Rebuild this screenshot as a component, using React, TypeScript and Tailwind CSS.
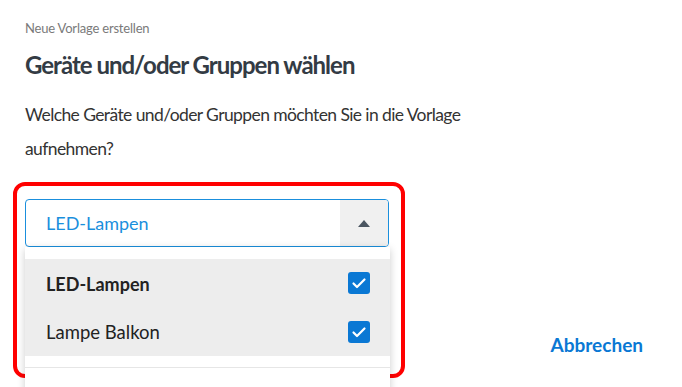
const items = [
  { label: 'LED-Lampen', bold: true },
  { label: 'Lampe Balkon', bold: false },
]

function Checkbox() {
  return (
    <span className="flex h-[22px] w-[22px] items-center justify-center rounded-[3px] bg-[#0a78d4]">
      <svg viewBox="0 0 16 16" className="h-[16px] w-[16px]" fill="none">
        <path d="M2.5 8.5l3.5 3.5 7.5-7.5" stroke="white" strokeWidth="2.2" strokeLinecap="round" strokeLinejoin="round" />
      </svg>
    </span>
  )
}

export default function App() {
  return (
    <div className="relative h-[387px] w-[682px] overflow-hidden bg-white px-[25px] font-['Lato',sans-serif]">
      <p className="pt-[18px] text-[13px] leading-[20px] tracking-[-0.2px] text-[#7a7a7a]">Neue Vorlage erstellen</p>
      <h1 className="mt-[9px] text-[24px] font-bold leading-[36px] tracking-[-1px] text-[#333b44]">
        Geräte und/oder Gruppen wählen
      </h1>
      <p className="mt-[15px] w-[470px] text-[17.5px] leading-[34px] tracking-[-0.6px] text-[#333]">
        Welche Geräte und/oder Gruppen möchten Sie in die Vorlage aufnehmen?
      </p>

      <div className="relative mt-[33px] w-[364px]">
        <div className="flex h-[48px] items-stretch overflow-hidden rounded-[4px] border border-[#1a8fdd]">
          <span className="flex flex-1 items-center pl-[20px] text-[18px] text-[#1a8fdd]">LED-Lampen</span>
          <span className="flex w-[48px] items-center justify-center bg-[#f0f0f0]">
            <svg viewBox="0 0 12 7" className="h-[7px] w-[12px]">
              <path d="M0 7L6 0l6 7z" fill="#4a5560" />
            </svg>
          </span>
        </div>

        <div className="absolute left-0 top-full z-10 w-[365px] bg-white pt-[12px] shadow-[0_2px_8px_rgba(0,0,0,0.2)]">
          <ul className="bg-[#ededed]">
            {items.map((item) => (
              <li key={item.label} className="flex h-[48.5px] items-center justify-between pl-[21px] pr-[20px]">
                <span className={item.bold ? 'pt-[2px] text-[18px] font-bold text-[#222]' : 'pt-[3px] text-[18.5px] text-[#222]'}>
                  {item.label}
                </span>
                <Checkbox />
              </li>
            ))}
          </ul>
          <div className="h-[11px]" />
          <div className="h-[40px] border-t border-[#e6e6e6]" />
        </div>
      </div>

      <div className="mt-[86px] flex justify-end pr-[14px]">
        <button className="text-[19px] font-bold leading-[24px] text-[#0a78d4]">Abbrechen</button>
      </div>

      <div className="pointer-events-none absolute left-[13px] top-[182px] h-[196px] w-[392px] rounded-[12px] border-4 border-[#ff0000]" />
    </div>
  )
}
